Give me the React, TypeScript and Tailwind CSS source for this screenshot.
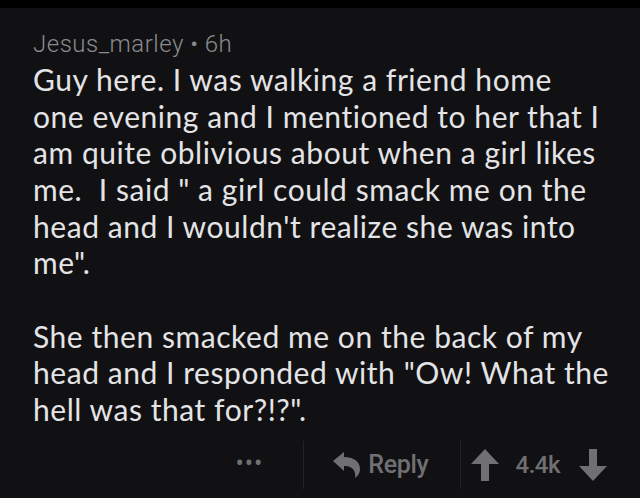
import React from "react";

const lines = [
  "Guy here. I was walking a friend home",
  "one evening and I mentioned to her that I",
  "am quite oblivious about when a girl likes",
  'me.  I said " a girl could smack me on the',
  "head and I wouldn't realize she was into",
  'me".',
  "",
  "She then smacked me on the back of my",
  'head and I responded with "Ow! What the',
  'hell was that for?!?".',
];

function ArrowUp() {
  return (
    <svg width="28" height="32" viewBox="0 0 28 32" fill="currentColor">
      <polygon points="14,0 28,15 18,15 18,32 10,32 10,15 0,15" />
    </svg>
  );
}

function ArrowDown() {
  return (
    <svg width="28" height="32" viewBox="0 0 28 32" fill="currentColor">
      <polygon points="10,0 18,0 18,17 28,17 14,32 0,17 10,17" />
    </svg>
  );
}

function ReplyIcon() {
  return (
    <svg width="28" height="26" viewBox="0 0 28 26" fill="currentColor">
      <path d="M0 9 L11 0 L11 5 C20 5 27 9 27 17 C27 21 25 24 22 26 C23 22 22 14 11 14 L11 19 Z" />
    </svg>
  );
}

export default function App() {
  return (
    <div className="w-[640px] h-[498px] bg-[#111113] overflow-hidden">
      <div className="h-2 bg-black" />
      <div className="pl-[33px] pr-2 pt-[22px]">
        <div
          className="text-[24px] leading-[28px] text-[#8b8b8e] font-light tracking-[0.5px]"
          style={{ fontFamily: "Roboto, 'Noto Sans', sans-serif" }}
        >
          Jesus_marley • 6h
        </div>
        <div
          className="mt-[3px] text-[30px] leading-[36.67px] text-[#e4e4e6] tracking-[0.55px] whitespace-pre"
          style={{ fontFamily: "Lato, 'Open Sans', sans-serif" }}
        >
          {lines.map((l, i) => (
            <div key={i} className="h-[36.67px]">{l}</div>
          ))}
        </div>
      </div>

      {/* Footer actions */}
      <div className="mt-[13px] flex items-center justify-end h-12 text-[#707073]">
        <div className="text-[22px] leading-none tracking-[1px] mr-[40px] -mt-2">•••</div>
        <div className="w-px h-12 bg-[#232326]" />
        <div className="flex items-center gap-[7px] ml-[29px]">
          <ReplyIcon />
          <span
            className="text-[25px] font-medium tracking-[-0.3px]"
            style={{ fontFamily: "Roboto, sans-serif" }}
          >
            Reply
          </span>
        </div>
        <div className="w-px h-12 bg-[#232326] ml-[31px]" />
        <div className="flex items-center ml-[10px] mr-[33px]">
          <ArrowUp />
          <span
            className="text-[24px] font-medium ml-[17px] mr-[19px] tracking-[-0.5px]"
            style={{ fontFamily: "Roboto, sans-serif" }}
          >
            4.4k
          </span>
          <ArrowDown />
        </div>
      </div>
    </div>
  );
}
